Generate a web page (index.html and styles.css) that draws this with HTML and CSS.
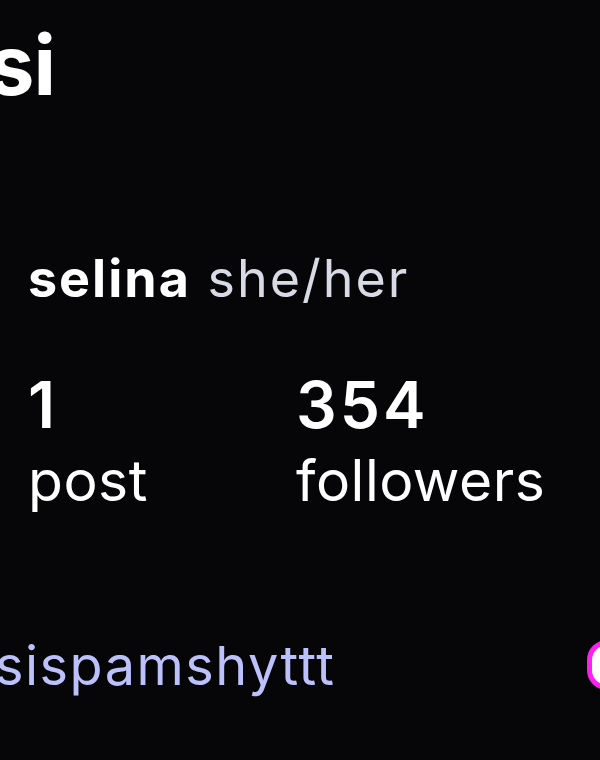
FILE: index.html
```html
<!DOCTYPE html>
<html lang="en">
<head>
  <meta charset="UTF-8">
  <meta name="viewport" content="width=device-width, initial-scale=1.0">
  <title>selina</title>
  <link rel="stylesheet" href="styles.css">
</head>
<body>

  <div class="profile">
    <h1 class="profile-title">si</h1>

    <div class="profile-name">
      <span class="name">selina</span>
      <span class="pronouns">she/her</span>
    </div>

    <div class="stats">
      <div class="stat">
        <div class="stat-num">1</div>
        <div class="stat-label">post</div>
      </div>
      <div class="stat">
        <div class="stat-num">354</div>
        <div class="stat-label">followers</div>
      </div>
    </div>

    <div class="handle-row">
      <span class="handle">sispamshyttt</span>
      <span class="pill"></span>
    </div>
  </div>

</body>
</html>
```

FILE: styles.css
```css
html, body{
  margin:0;
  padding:0;
  background:#060608;
}
body{
  width:600px;
  height:760px;
  overflow:hidden;
  font-family:"Inter","Noto Sans",sans-serif;
  color:#fff;
}
.profile{
  padding:24px 0 0 0;
}
.profile-title{
  margin:0 0 0 -12px;
  font-size:83px;
  line-height:1;
  font-weight:700;
  letter-spacing:-1px;
}
.profile-name{
  margin-top:146px;
  padding-left:28px;
  font-size:52px;
  line-height:1;
}
.profile-name .name{
  font-weight:700;
  letter-spacing:2px;
}
.profile-name .pronouns{
  margin-left:2px;
  font-weight:400;
  letter-spacing:2px;
  color:#d9dae6;
}
.stats{
  display:grid;
  grid-template-columns:268px 1fr;
  margin-top:68px;
  padding-left:28px;
}
.stat-num{
  font-size:64px;
  line-height:1;
  font-weight:600;
  letter-spacing:3px;
}
.stat-label{
  margin-top:15px;
  font-size:57px;
  line-height:1;
  font-weight:400;
  letter-spacing:0.5px;
}
.handle-row{
  display:flex;
  justify-content:space-between;
  align-items:center;
  margin-top:130px;
}
.handle{
  margin-left:-5px;
  font-size:54px;
  line-height:1;
  letter-spacing:1.5px;
  color:#bcc0fb;
}
.pill{
  box-sizing:border-box;
  width:60px;
  height:50px;
  margin-right:-47px;
  margin-top:-2px;
  border:5px solid #ff1ff0;
  border-radius:20px;
  background:#fff;
}
```
